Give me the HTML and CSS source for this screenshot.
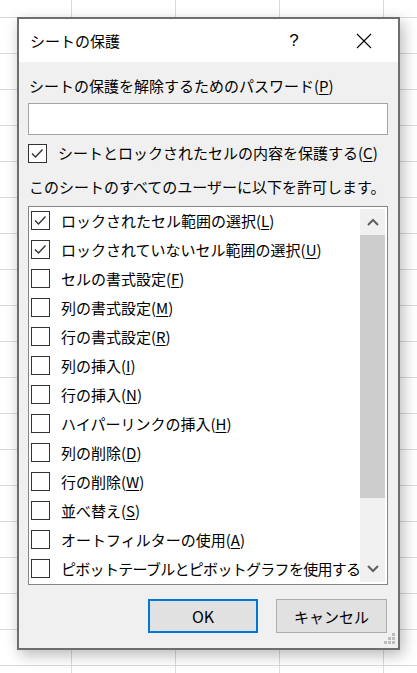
FILE: index.html
```html
<!DOCTYPE html>
<html lang="ja">
<head>
    <meta charset="UTF-8">
    <meta name="viewport" content="width=device-width, initial-scale=1.0">
    <title>シートの保護</title>
    <link rel="stylesheet" href="styles.css">
</head>
<body>
    <div class="dialog">
        <div class="titlebar">
            <span class="title">シートの保護</span>
            <span class="help">?</span>
            <svg class="close" width="16" height="16" viewBox="0 0 16 16">
                <path d="M1 1 L15 15 M15 1 L1 15" stroke="#000" stroke-width="1.1" fill="none"/>
            </svg>
        </div>

        <div class="content">
            <label class="field-label" for="password">シートの保護を解除するためのパスワード(<u>P</u>)</label>
            <input class="password" type="password" id="password">

            <div class="check-row main-check">
                <span class="box">
                    <svg width="17" height="17" viewBox="0 0 17 17"><polyline points="3,8.5 6.5,12 13.5,4.5" fill="none" stroke="#333" stroke-width="1.4"/></svg>
                </span>
                <span class="check-text">シートとロックされたセルの内容を保護する(<u>C</u>)</span>
            </div>

            <p class="allow-label">このシートのすべてのユーザーに以下を許可します。</p>

            <div class="list">
                <ul class="items" id="items"></ul>
                <div class="scrollbar">
                    <div class="arrow">
                        <svg width="12" height="8" viewBox="0 0 12 8"><polyline points="1,7 6,2 11,7" fill="none" stroke="#606060" stroke-width="2"/></svg>
                    </div>
                    <div class="thumb"></div>
                    <div class="track"></div>
                    <div class="arrow">
                        <svg width="12" height="8" viewBox="0 0 12 8"><polyline points="1,1 6,6 11,1" fill="none" stroke="#606060" stroke-width="2"/></svg>
                    </div>
                </div>
            </div>

            <div class="buttons">
                <button class="btn btn-ok" type="button">OK</button>
                <button class="btn" type="button">キャンセル</button>
            </div>
        </div>

        <svg class="grip" width="12" height="12" viewBox="0 0 12 12" fill="#bcbcbc">
            <rect x="8" y="0" width="3" height="3"/>
            <rect x="4" y="4" width="3" height="3"/>
            <rect x="8" y="4" width="3" height="3"/>
            <rect x="0" y="8" width="3" height="3"/>
            <rect x="4" y="8" width="3" height="3"/>
            <rect x="8" y="8" width="3" height="3"/>
        </svg>
    </div>

    <script>
        const options = [
            ['ロックされたセル範囲の選択', 'L', true],
            ['ロックされていないセル範囲の選択', 'U', true],
            ['セルの書式設定', 'F', false],
            ['列の書式設定', 'M', false],
            ['行の書式設定', 'R', false],
            ['列の挿入', 'I', false],
            ['行の挿入', 'N', false],
            ['ハイパーリンクの挿入', 'H', false],
            ['列の削除', 'D', false],
            ['行の削除', 'W', false],
            ['並べ替え', 'S', false],
            ['オートフィルターの使用', 'A', false],
            ['ピボットテーブルとピボットグラフを使用する', '', false]
        ];

        const check = '<svg width="17" height="17" viewBox="0 0 17 17"><polyline points="3,8.5 6.5,12 13.5,4.5" fill="none" stroke="#333" stroke-width="1.4"/></svg>';
        const items = document.getElementById('items');

        options.forEach(([text, key, checked]) => {
            const li = document.createElement('li');
            const mnemonic = key ? `(<u>${key}</u>)` : '';
            // the long last label only fits if it is set a little tighter
            const tight = text.length > 18 ? ' tight' : '';
            li.innerHTML = `
                <span class="box">${checked ? check : ''}</span>
                <span class="check-text${tight}">${text}${mnemonic}</span>
            `;
            items.appendChild(li);
        });
    </script>
</body>
</html>
```

FILE: styles.css
```css
body {
    margin: 0;
    padding: 17px 0 0 17px;
    height: 673px;
    box-sizing: border-box;
    overflow: hidden;
    font-family: "Noto Sans CJK JP", "Noto Sans", sans-serif;
    font-size: 15px;
    color: #000;
    background-color: #fff;
    background-image:
        linear-gradient(to right, #dadada 1px, transparent 1px),
        linear-gradient(to bottom, #dadada 1px, transparent 1px);
    background-size: 104px 36px;
    background-position: 71px 17px;
}
.dialog {
    position: relative;
    width: 379px;
    border: 2px solid #6e6e6e;
    background-color: #f0f0f0;
    box-shadow: 3px 5px 14px rgba(0, 0, 0, 0.28);
}
.titlebar {
    height: 43px;
    display: flex;
    align-items: center;
    background-color: #fff;
}
.title {
    flex: 1;
    padding-left: 11px;
    line-height: 20px;
}
.help {
    width: 20px;
    margin-right: 52px;
    text-align: center;
    font-family: "Liberation Sans", sans-serif;
    font-size: 17px;
}
.close {
    margin-right: 26px;
}
.content {
    padding: 14px 10px 15px 9px;
}
.field-label {
    display: block;
    padding-left: 1px;
    line-height: 20px;
}
.password {
    display: block;
    box-sizing: border-box;
    width: 360px;
    height: 32px;
    margin: 7px 0 0;
    border: 1px solid #a5a5a5;
    background-color: #fff;
    outline: none;
}
.check-row {
    display: flex;
    align-items: center;
    height: 20px;
}
.main-check {
    margin-top: 8px;
}
.main-check .check-text {
    margin-left: 11px;
}
.box {
    box-sizing: border-box;
    width: 19px;
    height: 19px;
    flex: none;
    border: 1px solid #333;
    background-color: #fff;
}
.box svg {
    display: block;
}
.check-text {
    line-height: 20px;
    white-space: nowrap;
}
.check-text.tight {
    letter-spacing: -0.7px;
}
u {
    text-decoration-thickness: 1px;
    text-underline-offset: 2px;
}
.allow-label {
    margin: 14px 0 0;
    padding-left: 1px;
    line-height: 20px;
}
.list {
    display: flex;
    box-sizing: border-box;
    width: 360px;
    height: 379px;
    margin-top: 9px;
    border: 1px solid #858585;
    background-color: #fff;
}
.items {
    flex: 1;
    min-width: 0;
    margin: 0;
    padding: 0 0 0 2px;
    list-style: none;
    overflow: hidden;
}
.items li {
    display: flex;
    align-items: flex-start;
    height: 29px;
    gap: 11px;
}
.items .box {
    margin-top: 4px;
}
.items .check-text {
    margin-top: 4px;
}
.scrollbar {
    display: flex;
    flex-direction: column;
    width: 25px;
    margin: 2px 2px 2px 0;
    background-color: #f0f0f0;
}
.arrow {
    height: 26px;
    display: flex;
    align-items: center;
    justify-content: center;
}
.thumb {
    height: 263px;
    background-color: #cdcdcd;
}
.track {
    flex: 1;
}
.buttons {
    display: flex;
    justify-content: flex-end;
    gap: 18px;
    margin-top: 14px;
    width: 359px;
}
.btn {
    box-sizing: border-box;
    width: 111px;
    height: 34px;
    border: 1px solid #adadad;
    background-color: #e1e1e1;
    font-family: inherit;
    font-size: 15px;
    color: #000;
    padding: 0;
}
.btn-ok {
    width: 110px;
    border: 2px solid #0078d7;
    font-size: 16px;
}
.grip {
    position: absolute;
    right: 2px;
    bottom: 3px;
}
```
